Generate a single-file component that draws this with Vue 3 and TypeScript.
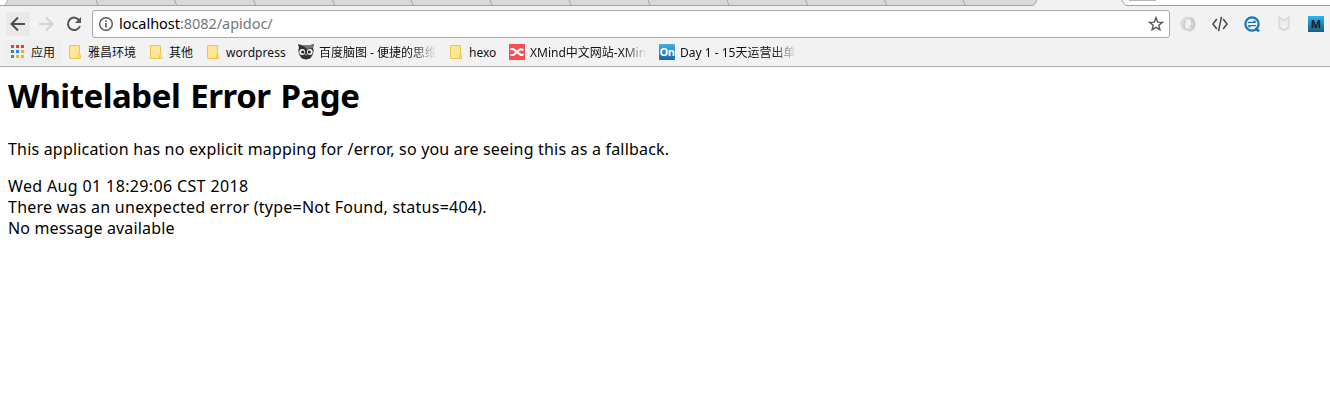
<script setup lang="ts">
const dividers: number[] = [98, 176.5, 255.5, 334.5, 413, 492, 571, 650, 729, 807.5, 886.5, 965]

interface Bookmark {
  label: string
  icon: 'folder' | 'owl' | 'xmind' | 'on'
  kind: string
  fade?: boolean
}

const bookmarks: Bookmark[] = [
  { label: '雅昌环境', icon: 'folder', kind: 'b1' },
  { label: '其他', icon: 'folder', kind: 'b2' },
  { label: 'wordpress', icon: 'folder', kind: 'b3' },
  { label: '百度脑图 - 便捷的思维', icon: 'owl', kind: 'b4', fade: true },
  { label: 'hexo', icon: 'folder', kind: 'b5' },
  { label: 'XMind中文网站-XMin', icon: 'xmind', kind: 'b6', fade: true },
  { label: 'Day 1 - 15天运营出单', icon: 'on', kind: 'b7', fade: true },
]

const dotColors: string[] = ['#ef3a36', '#ef3a36', '#ef3a36', '#34a05a', '#2684f0', '#f8ad12', '#34a05a', '#f8ad12', '#f8ad12']
</script>

<template>
  <div class="window">
    <svg class="tabs" width="1330" height="6" viewBox="0 0 1330 6">
      <rect width="1330" height="6" fill="#fff" />
      <path d="M7.500 0L5 5H1034L1037 0Z" fill="#d9d9d9" />
      <path d="M1037 0L1034 5V6H1125L1122 0Z" fill="#f2f2f2" />
      <path d="M0 5.500H1033Q1035 5 1037 0M1122 0Q1124 5 1126 5.500H1330" fill="none" stroke="#a3a3a3" />
      <path d="M8 0L5 5" stroke="#b0b0b0" />
      <path v-for="x in dividers" :key="x" :d="`M${x - 2} 0L${x} 5`" stroke="#a5a5a5" fill="none" />
      <rect x="1129" width="27" height="1" fill="#b8b8b8" />
    </svg>
    <div class="toolbar">
      <div class="nav back">
        <svg width="24" height="24" viewBox="0 0 24 24"><path d="M19 12H6M12 5.500L5.500 12L12 18.500" fill="none" stroke="#4d4d4d" stroke-width="2" /></svg>
      </div>
      <svg class="nav" width="24" height="24" viewBox="0 0 24 24"><path d="M5 12H18M12 5.500L18.500 12L12 18.500" fill="none" stroke="#d3d3d3" stroke-width="2" /></svg>
      <svg class="nav" width="24" height="24" viewBox="0 0 24 24">
        <path d="M17.300 8.300A6.200 6.200 0 1 0 18 14" fill="none" stroke="#555" stroke-width="2" />
        <path d="M19 5V11H13Z" fill="#555" />
      </svg>
      <div class="omnibox">
        <svg class="info" width="16" height="16" viewBox="0 0 16 16">
          <circle cx="8" cy="8" r="6.300" fill="none" stroke="#555" stroke-width="1.400" />
          <path d="M8 7V11.500M8 4.300V5.900" stroke="#555" stroke-width="1.600" />
        </svg>
        <div class="url">localhost<span>:8082/apidoc/</span></div>
        <svg class="star" width="16" height="16" viewBox="0 0 16 16"><path d="M8 1.800L9.700 6.100L14.300 6.400L10.800 9.300L11.900 13.800L8 11.300L4.100 13.800L5.200 9.300L1.700 6.400L6.300 6.100Z" fill="none" stroke="#555" stroke-width="1.400" /></svg>
      </div>
      <div class="extensions">
        <svg width="16" height="16" viewBox="0 0 16 16">
          <path d="M8 .5C2.500.5-.2 5 .5 9.500C1.200 12.800 3.500 14.800 6.500 15.200C3 11 2.500 7 4.500 4C5.500 2.300 7 1.500 8 .5Z" fill="#dcdcdc" />
          <path d="M8 15.500C13.500 15.500 16.200 11 15.500 6.500C14.800 3.200 12.500 1.200 9.500.8C13 5 13.500 9 11.500 12C10.500 13.700 9 14.500 8 15.500Z" fill="#cbcbcb" />
          <path d="M6 2.500Q12.500 1.500 12 8Q11.500 10.500 10 12M10 13.500Q3.500 14.500 4 8Q4.500 5.500 6 4" fill="none" stroke="#cdcdcd" stroke-width="1.800" />
        </svg>
        <svg width="16" height="16" viewBox="0 0 16 16"><path d="M4.800 3L1 8L4.800 13M11.200 3L15 8L11.200 13M9.500.8L6.500 15.200" fill="none" stroke="#484848" stroke-width="1.500" /></svg>
        <svg width="16" height="16" viewBox="0 0 16 16">
          <circle cx="8" cy="8" r="6.600" fill="none" stroke="#1b75bb" stroke-width="2.200" />
          <path d="M11.500 12L15 15.400" stroke="#1b75bb" stroke-width="2.600" />
          <path d="M3.800 6.400H11.800M4.200 9.600H12.200M9.800 4.700L11.800 6.400M6.200 11.300L4.200 9.600" stroke="#1b75bb" stroke-width="1.400" fill="none" />
        </svg>
        <svg width="16" height="16" viewBox="0 0 16 16">
          <path d="M3.200 10V1.500L8 4.500L12.800 1.500V10" fill="none" stroke="#dadada" stroke-width="2" />
          <path d="M5.500 5.500V9M10.500 5.500V9" stroke="#e2e2e2" />
          <path d="M2.500 11L8 14.300L13.500 11" fill="none" stroke="#d2d2d2" stroke-width="1.800" />
        </svg>
        <div class="m-icon">M</div>
      </div>
    </div>
    <div class="bookmarks">
      <div class="apps">
        <div class="dots"><i v-for="(c, i) in dotColors" :key="i" :style="{ background: c }"></i></div>
        <span class="apps-label">应用</span>
      </div>
      <div v-for="b in bookmarks" :key="b.kind" class="bookmark" :class="b.kind">
        <svg v-if="b.icon === 'folder'" width="16" height="16" viewBox="0 0 16 16">
          <path d="M2.500 1.500H12.500V14.500H2.500Z" fill="#ffe694" stroke="#e9c64e" />
          <path d="M11.500 14.500V11.500Q11.500 10.500 12.500 10.500Q13.500 10.500 13.500 11.500V14.500Z" fill="#ffe694" stroke="#e9c64e" />
        </svg>
        <svg v-else-if="b.icon === 'owl'" width="16" height="16" viewBox="0 0 16 16">
          <path d="M0 0L5 1.500H11L16 0L15 4Q16 6 15.500 8Q14 15.500 8 15.500Q2 15.500 .5 8Q0 5 1 4Z" fill="#303438" />
          <path d="M5 1.500H11L16 0L15 4L9 5Z" fill="#74777a" />
          <circle cx="4.200" cy="8" r="2.900" fill="#f5f5f5" /><circle cx="11.800" cy="8" r="2.900" fill="#f5f5f5" />
          <circle cx="4.700" cy="8" r="1.600" fill="#25292d" /><circle cx="11.300" cy="8" r="1.600" fill="#25292d" />
          <path d="M7 10H9L8 12Z" fill="#aaa" />
        </svg>
        <svg v-else-if="b.icon === 'xmind'" width="16" height="16" viewBox="0 0 16 16">
          <rect width="16" height="16" fill="#fb4c50" />
          <path d="M1.500 5.200H4.200L8 7.800L11.500 5.200L14.500 6M1.500 11L4.500 10.800L8 8.200L11.800 10.800H14.500" fill="none" stroke="#fff" stroke-width="2.200" />
        </svg>
        <div v-else class="on-icon">On</div>
        <span class="label" :class="{ fade: b.fade }">{{ b.label }}</span>
      </div>
    </div>
    <main>
      <h1>Whitelabel Error Page</h1>
      <p class="intro">This application has no explicit mapping for /error, so you are seeing this as a fallback.</p>
      <div class="date">Wed Aug 01 18:29:06 CST 2018</div>
      <div class="type">There was an unexpected error (type=Not Found, status=404).</div>
      <div class="message">No message available</div>
    </main>
  </div>
</template>

<style>
body { margin: 0; background: #fff; }
</style>

<style scoped>
* { box-sizing: border-box; }
.window { width: 1330px; height: 416px; overflow: hidden; background: #fff; font-family: "Noto Sans", "Noto Sans CJK SC", sans-serif; color: #000; }
svg { display: block; flex-shrink: 0; }
.toolbar { height: 34px; background: #f2f2f2; display: flex; padding: 4px 6px 0; }
.nav { width: 24px; height: 24px; margin: 2px 4px 0 0; }
.back { background: #e9e9e9; border-radius: 2px; }
.omnibox { width: 1078px; height: 28px; margin-left: 2px; border: 1px solid #a8a8a8; border-radius: 3px; background: #fff; display: flex; align-items: center; padding: 0 5px; }
.info { margin-right: 5px; }
.url { flex: 1; font-size: 14.500px; line-height: 24px; padding-bottom: 2px; letter-spacing: -.04px; white-space: nowrap; }
.url span { color: #777; }
.extensions { display: flex; gap: 16px; margin: 6px 0 0 10px; }
.m-icon { width: 16px; height: 16px; background: linear-gradient(#29b6f2, #1b5d7c); color: #101820; font: 700 11px/16px "Open Sans", sans-serif; text-align: center; }
.bookmarks { height: 27px; background: #f2f2f2; border-bottom: 1px solid #aaa; display: flex; padding-left: 4px; font-size: 12px; line-height: 20px; color: #111; }
.apps { width: 57px; height: 24px; display: flex; align-items: center; padding-left: 7px; background: #eee; }
.dots { display: grid; grid-template-columns: repeat(3, 3px); gap: 2px; margin: 0 7px 1px 0; }
.dots i { width: 3px; height: 3px; }
.apps-label { padding-top: 2px; }
.bookmark { display: flex; height: 24px; align-items: center; white-space: nowrap; }
.label { margin-left: 5px; padding-top: 2px; overflow: hidden; }
.b1 { margin-left: 6px; width: 81px; }
.b2 { width: 57px; }
.b3 { width: 93px; }
.b3 .label { letter-spacing: .08px; }
.b4 { width: 150px; }
.b5 { width: 61px; }
.b6 { width: 150px; }
.b7 { width: 140px; }
.fade { width: 117px; mask-image: linear-gradient(to right, #000 80%, transparent 100%); }
.on-icon { width: 16px; height: 16px; flex-shrink: 0; background: linear-gradient(#45aee0, #1765ad); border-radius: 1px; color: #fff; font: 700 11px/16px "Open Sans", sans-serif; text-align: center; letter-spacing: -.5px; }
main { padding: 7px 8px 0; font-size: 16px; line-height: 21px; white-space: nowrap; }
h1 { font-size: 33px; line-height: 44px; margin: 0 0 21px; letter-spacing: -.5px; word-spacing: 2px; }
p { margin: 0 0 16px; }
.intro { letter-spacing: .19px; }
.date { letter-spacing: .36px; }
.type { letter-spacing: .245px; }
.message { letter-spacing: .15px; }
</style>
